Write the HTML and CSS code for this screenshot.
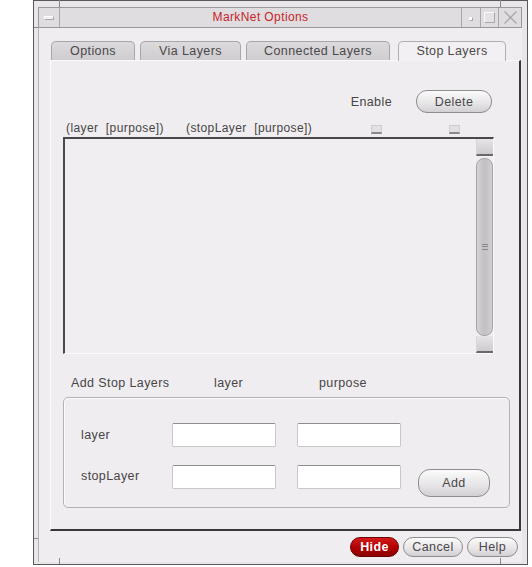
FILE: index.html
```html
<!DOCTYPE html>
<html>
<head>
<meta charset="utf-8">
<link rel="stylesheet" href="styles.css">
</head>
<body>
<div class="wm">
  <span class="tick tick-top-l"></span>
  <span class="tick tick-top-r"></span>
  <span class="tick tick-left-t"></span>
  <span class="tick tick-left-b"></span>
  <span class="tick tick-bot-l"></span>
  <span class="tick tick-bot-r"></span>
  <div class="titlebar">
    <div class="tb-menu"><span class="menu-bar"></span></div>
    <div class="tb-title">MarkNet Options</div>
    <div class="tb-btn tb-min"><span class="min-dot"></span></div>
    <div class="tb-btn tb-max"><span class="max-box"></span></div>
    <div class="tb-btn tb-close">
      <svg width="15" height="15" viewBox="0 0 15 15"><path d="M1.5 1.5 L13.5 13.5 M13.5 1.5 L1.5 13.5" stroke="#a9a7a9" stroke-width="1.3" fill="none"/></svg>
    </div>
  </div>
  <div class="client">
    <div class="tabs">
      <div class="tab tab-options">Options</div>
      <div class="tab tab-via">Via Layers</div>
      <div class="tab tab-conn">Connected Layers</div>
      <div class="tab tab-stop active">Stop Layers</div>
    </div>
    <div class="panel">
      <div class="top-row">
        <span class="enable-label">Enable</span>
        <button class="btn btn-delete">Delete</button>
      </div>
      <div class="header-row">
        <span class="col-layer">(layer&nbsp;&nbsp;[purpose])</span>
        <span class="col-stop">(stopLayer&nbsp;&nbsp;[purpose])</span>
        <span class="check"></span>
        <span class="check check-2"></span>
      </div>
      <div class="list">
        <div class="list-body"></div>
        <div class="scroll">
          <div class="scroll-btn"></div>
          <div class="scroll-thumb"><span class="grip"></span></div>
          <div class="scroll-btn"></div>
        </div>
      </div>
      <div class="add-row">
        <span class="add-title">Add Stop Layers</span>
        <span class="add-layer">layer</span>
        <span class="add-purpose">purpose</span>
      </div>
      <div class="group">
        <div class="grow grow-1">
          <span class="glabel">layer</span>
          <span class="field"></span>
          <span class="field field-2"></span>
        </div>
        <div class="grow grow-2">
          <span class="glabel">stopLayer</span>
          <span class="field"></span>
          <span class="field field-2"></span>
          <button class="btn btn-add">Add</button>
        </div>
      </div>
    </div>
    <div class="footer">
      <button class="btn btn-hide">Hide</button>
      <button class="btn btn-cancel">Cancel</button>
      <button class="btn btn-help">Help</button>
    </div>
  </div>
</div>
</body>
</html>
```

FILE: styles.css
```css
* { box-sizing: border-box; }
html, body { margin: 0; padding: 0; background: #ffffff; }
body {
  font-family: "Liberation Sans", Arial, sans-serif;
  font-size: 12px;
  letter-spacing: 0.4px;
  color: #474547;
}

.wm {
  position: relative;
  margin-left: 33px;
  width: 495px;
  height: 565px;
  border: 1px solid #5a585a;
  background: #e8e6e8;
  padding: 6px 5px 2px 4px;
  display: flex;
  flex-direction: column;
}

.tick { position: absolute; background: #8a888a; }
.tick-top-l { left: 25px; top: -1px; width: 1px; height: 7px; }
.tick-top-r { left: 466px; top: -1px; width: 1px; height: 7px; }
.tick-left-t { left: 0; top: 26px; width: 4px; height: 1px; }
.tick-left-b { left: 0; top: 537px; width: 4px; height: 1px; }
.tick-bot-l { left: 25px; bottom: 0; width: 1px; height: 6px; }
.tick-bot-r { left: 466px; bottom: 0; width: 1px; height: 6px; }

.titlebar {
  height: 21px;
  display: flex;
  border: 1px solid #9a989a;
  background: #dfdddf;
}
.tb-menu {
  width: 21px;
  display: flex;
  align-items: center;
  justify-content: center;
  border-right: 1px solid #a9a7a9;
}
.menu-bar {
  width: 10px;
  height: 4px;
  background: #f2f0f2;
  border: 1px solid #a9a7a9;
  border-top-color: #fff;
  border-left-color: #fff;
}
.tb-title {
  flex: 1;
  text-align: center;
  color: #c8242a;
  line-height: 19px;
  font-size: 12px;
}
.tb-btn {
  display: flex;
  align-items: center;
  justify-content: center;
  border-left: 1px solid #a9a7a9;
}
.tb-min { width: 19px; }
.tb-max { width: 18px; }
.tb-close { width: 23px; }
.min-dot {
  width: 4px; height: 4px;
  background: #fbfbfb;
  border: 1px solid #a9a7a9;
  border-top-color: #fff; border-left-color: #fff;
  margin-top: 3px;
}
.max-box {
  width: 11px; height: 11px;
  border: 1px solid #a9a7a9;
  border-top-color: #fbfbfb; border-left-color: #fbfbfb;
  background: #e4e2e4;
}

.client {
  flex: 1;
  background: #efedef;
  border-left: 1px solid #b5b3b5;
  padding: 13px 1px 0 11px;
  display: flex;
  flex-direction: column;
}

.tabs {
  height: 19px;
  margin-left: 1px;
  display: flex;
  align-items: flex-end;
}
.tab {
  height: 19px;
  border: 1px solid #a8a6a8;
  border-bottom: none;
  border-radius: 5px 5px 0 0;
  background: linear-gradient(#dcdadc, #cfcdcf);
  color: #4a484a;
  text-align: center;
  line-height: 19px;
  font-size: 12.5px;
}
.tab-options { width: 84px; }
.tab-via { width: 101px; margin-left: 5px; }
.tab-conn { width: 144px; margin-left: 5px; }
.tab-stop { width: 108px; margin-left: 8px; }
.tab.active {
  background: #f2f0f2;
  border-color: #b0aeb0;
  height: 20px;
  margin-bottom: -1px;
  position: relative;
  z-index: 1;
}

.panel {
  flex: 1;
  border-top: 1px solid #fbfbfb;
  border-left: 1px solid #fbfbfb;
  border-right: 2px solid #383838;
  border-bottom: 2px solid #383838;
  display: flex;
  flex-direction: column;
}

.top-row {
  margin-top: 29px;
  height: 23px;
  display: flex;
  justify-content: flex-end;
  align-items: center;
  padding-right: 27px;
}
.enable-label { margin-right: 24px; font-size: 12.5px; }

.btn {
  font-family: "Liberation Sans", Arial, sans-serif;
  font-size: 12.5px;
  letter-spacing: 0.4px;
  color: #4a484a;
  border: 1px solid #8e8c8e;
  background: linear-gradient(#fbfbfb, #e6e4e6 60%, #d2d0d2);
  border-radius: 11px;
  padding: 0;
  margin: 0;
}
.btn-delete { width: 76px; height: 23px; }

.header-row {
  margin-top: 8px;
  height: 14px;
  display: flex;
  align-items: center;
  padding-left: 15px;
  white-space: nowrap;
}
.col-layer { width: 120px; }
.col-stop { width: 185px; }
.check {
  width: 11px;
  height: 9px;
  margin-top: 2px;
  background: #e2e0e2;
  border: 1px solid #cfcdcf;
  border-bottom: 2px solid #8a888a;
}
.check-2 { margin-left: 67px; }

.list {
  margin: 2px 0 0 12px;
  width: 431px;
  height: 217px;
  border-top: 2px solid #4a484a;
  border-left: 2px solid #4a484a;
  border-right: 1px solid #fbfbfb;
  border-bottom: 1px solid #fbfbfb;
  background: #f0eef0;
  display: flex;
}
.list-body { flex: 1; }
.scroll {
  width: 17px;
  display: flex;
  flex-direction: column;
}
.scroll-btn {
  height: 17px;
  background: linear-gradient(#e6e4e6, #cdcbcd);
  border-bottom: 2px solid #6a686a;
  border-left: 1px solid #d8d6d8;
}
.scroll-thumb {
  flex: 1;
  margin: 2px 0 0 0;
  border-radius: 8px;
  border: 1px solid #a4a2a4;
  background: linear-gradient(90deg, #d6d4d6, #c4c2c4 40%, #c4c2c4 60%, #d2d0d2);
  display: flex;
  align-items: center;
  justify-content: center;
}
.grip {
  width: 6px;
  height: 6px;
  border-top: 1px solid #8a888a;
  border-bottom: 1px solid #8a888a;
  background: linear-gradient(#c4c2c4 0 1.5px, #8a888a 1.5px 2.5px, #c4c2c4 2.5px);
}

.add-row {
  margin-top: 22px;
  height: 14px;
  display: flex;
  padding-left: 20px;
  white-space: nowrap;
  font-size: 12.5px;
}
.add-title { width: 143px; }
.add-layer { width: 105px; }

.group {
  margin: 7px 0 0 12px;
  width: 447px;
  height: 111px;
  border: 1px solid #b4b2b4;
  border-radius: 5px;
  box-shadow: inset 1px 1px 0 #fbfbfb;
  padding: 25px 0 0 17px;
}
.grow {
  display: flex;
  align-items: center;
  font-size: 12.5px;
}
.grow-2 { margin-top: 18px; align-items: flex-start; }
.grow-2 .glabel { margin-top: 4px; }
.glabel { width: 91px; }
.field {
  width: 104px;
  height: 24px;
  background: #ffffff;
  border: 1px solid #c9c7c9;
  border-top-color: #8e8c8e;
  border-radius: 2px;
}
.field-2 { margin-left: 21px; }
.btn-add { width: 72px; height: 28px; margin: 4px 0 0 17px; border-radius: 12px; }

.footer {
  height: 31px;
  display: flex;
  justify-content: flex-end;
  align-items: flex-start;
  padding: 6px 3px 0 0;
  gap: 4px;
}
.footer .btn { height: 20px; border-radius: 10px; }
.btn-hide {
  width: 49px;
  background: linear-gradient(#d41a1a, #b00000 55%, #8a0000);
  border-color: #6a0000;
  color: #ffffff;
  font-weight: bold;
}
.btn-cancel { width: 60px; }
.btn-help { width: 51px; }
```
